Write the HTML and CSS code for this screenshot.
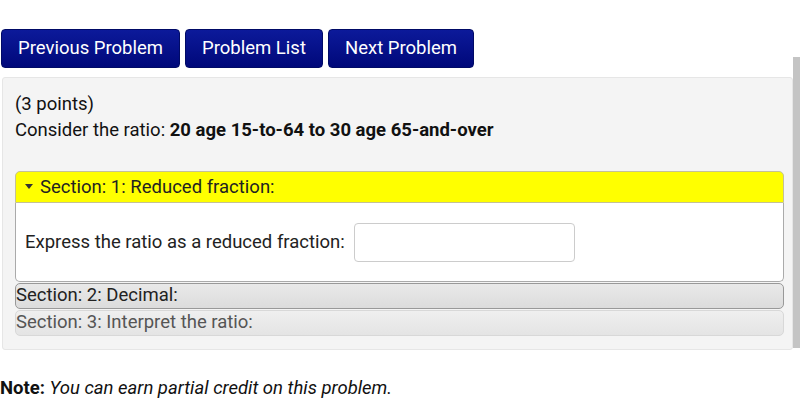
FILE: index.html
```html
<!DOCTYPE html>
<html>
<head>
    <meta charset="UTF-8" />
    <title>Problem</title>
    <link rel="stylesheet" href="styles.css">
</head>
<body>
<div class="nav">
    <a class="btn">Previous Problem</a>
    <a class="btn">Problem List</a>
    <a class="btn">Next Problem</a>
</div>
<div class="problem">
    <p>(3 points)</p>
    <p>Consider the ratio: <b>20 age 15-to-64 to 30 age 65-and-over</b></p>
    <div class="section open">
        <div class="head"><span class="caret"></span>Section: 1: Reduced fraction:</div>
        <div class="body">
            <label>Express the ratio as a reduced fraction:</label>
            <input type="text" />
        </div>
    </div>
    <div class="section shut">Section: 2: Decimal:</div>
    <div class="section shut dim">Section: 3: Interpret the ratio:</div>
</div>
<p class="note"><b>Note:</b> <i>You can earn partial credit on this problem.</i></p>
<div class="scroll"></div>
</body>
</html>
```

FILE: styles.css
```css
*{
    margin: 0;
    padding: 0;
    box-sizing: border-box;
}
body{
    font-family: Roboto, "Liberation Sans", sans-serif;
    font-size: 18.5px;
    color: #111;
    background: #fff;
}
.nav{
    display: flex;
    gap: 5px;
    padding: 29px 0 0 1px;
}
.btn{
    display: block;
    height: 39px;
    line-height: 36px;
    text-align: center;
    font-size: 18.5px;
    color: #fff;
    background: linear-gradient(#0c1a9a, #00087a);
    border: 1px solid #000a66;
    border-radius: 4px;
}
.btn:first-child{
    width: 179px;
}
.btn:nth-child(2){
    width: 138px;
}
.btn:nth-child(3){
    width: 146px;
}
.problem{
    margin: 9px 7px 0 2px;
    padding: 13px 8px 13px 12px;
    background: #f4f4f4;
    border: 1px solid #e6e6e6;
    border-radius: 3px;
}
.problem p{
    line-height: 26px;
}
.problem p b{
    font-weight: bold;
}
.section.open{
    margin-top: 28px;
}
.head{
    height: 32px;
    line-height: 30px;
    padding-left: 9px;
    background: #ffff00;
    border: 1px solid #c4c196;
    border-radius: 5px 5px 0 0;
    color: #222;
}
.caret{
    display: inline-block;
    width: 0;
    height: 0;
    margin: 0 7px 3px 0;
    border-left: 4px solid transparent;
    border-right: 4px solid transparent;
    border-top: 5px solid #333;
    vertical-align: middle;
}
.body{
    display: flex;
    align-items: center;
    gap: 9px;
    height: 79px;
    padding: 0 9px;
    background: #fff;
    border: 1px solid #aaa;
    border-top: 0;
    border-radius: 0 0 5px 5px;
    color: #222;
}
.body input{
    width: 221px;
    height: 39px;
    border: 1px solid #ccc;
    border-radius: 4px;
}
.shut{
    height: 26px;
    line-height: 23px;
    margin-top: 1px;
    background: linear-gradient(#e9e9e9, #dcdcdc);
    border: 1px solid #999;
    border-radius: 5px;
    color: #222;
}
.shut.dim{
    background: linear-gradient(#efefef, #e4e4e4);
    border-color: #d8d8d8;
    color: #555;
}
.note{
    margin-top: 28px;
    line-height: 20px;
}
.scroll{
    position: absolute;
    top: 57px;
    right: 0;
    width: 7px;
    height: 291px;
    background: #c4c4c4;
}
```
